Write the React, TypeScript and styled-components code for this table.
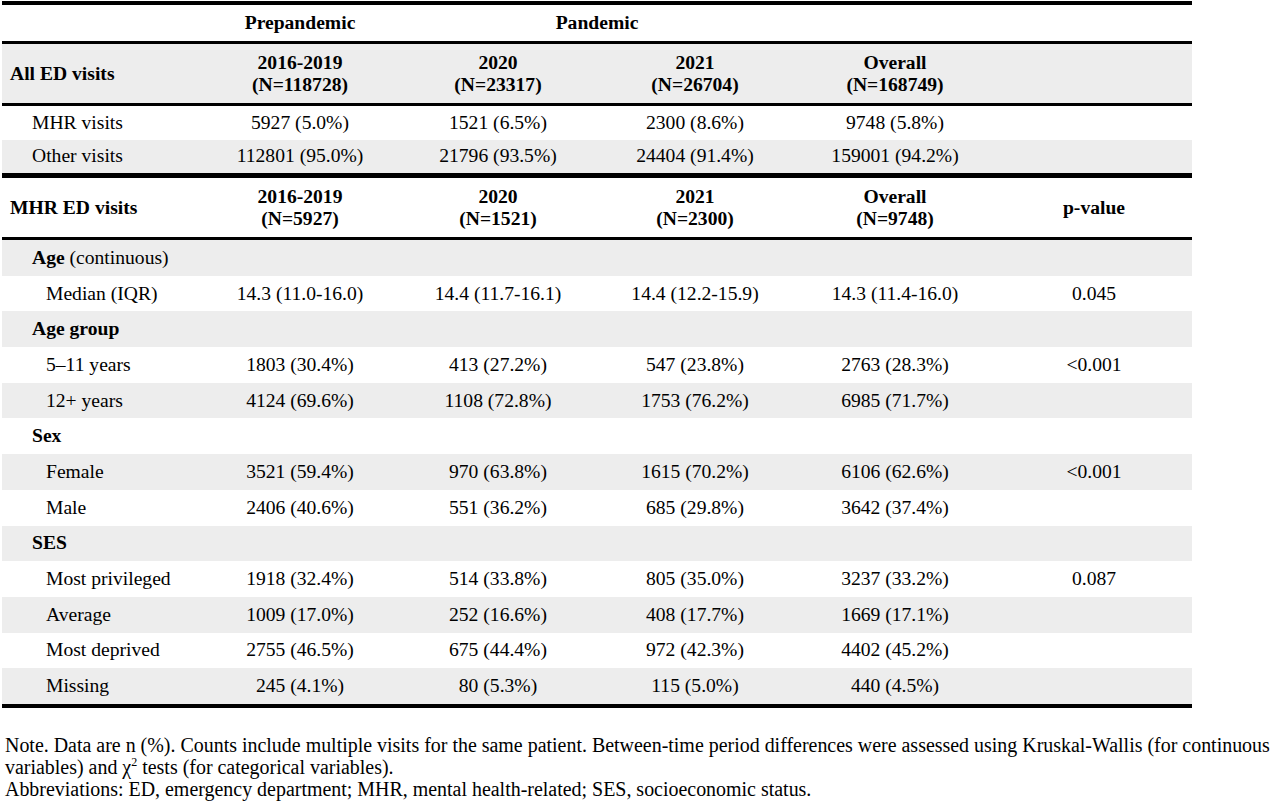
import styled, { createGlobalStyle } from "styled-components";

const GlobalStyle = createGlobalStyle`
    html, body {
        margin: 0;
        padding: 0;
        background: #fff;
        overflow: hidden;
    }
    body {
        font-family: "Liberation Serif", "Times New Roman", serif;
        color: #000;
    }
`;

const Page = styled.div`
    width: 1280px;
    height: 802px;
    padding: 1px 0 0 2px;
    box-sizing: border-box;
`;

const Table = styled.div`
    width: 1190px;
    display: flex;
    flex-direction: column;
    font-size: 19.6px;
`;

const Rule = styled.div<{ $h: number }>`
    height: ${p => p.$h}px;
    background: #000;
`;

const Row = styled.div<{ $h: number; $shade?: boolean }>`
    display: grid;
    grid-template-columns: 198px 200px 196px 198px 202px 196px;
    height: ${p => p.$h}px;
    background: ${p => (p.$shade ? '#ededed' : '#fff')};
    align-items: center;
`;

const Cell = styled.div<{ $indent?: number; $bold?: boolean; $span?: number }>`
    text-align: ${p => (p.$indent !== undefined ? 'left' : 'center')};
    padding-left: ${p => p.$indent ?? 0}px;
    font-weight: ${p => (p.$bold ? 700 : 400)};
    line-height: 22px;
    white-space: nowrap;
    grid-column: span ${p => p.$span ?? 1};
`;

const Note = styled.div`
    margin-top: 26px;
    padding-left: 3px;
    font-size: 19.95px;
    line-height: 22px;
    white-space: nowrap;
`;

const Sup = styled.sup`
    font-size: 12px;
    vertical-align: 8px;
    line-height: 0;
`;

type DataRow = {
    label: string;
    bold?: string;
    indent: number;
    values: string[];
    p?: string;
};

const groups: DataRow[] = [
    { label: ' (continuous)', bold: 'Age', indent: 30, values: [] },
    { label: 'Median (IQR)', indent: 44, values: ['14.3 (11.0-16.0)', '14.4 (11.7-16.1)', '14.4 (12.2-15.9)', '14.3 (11.4-16.0)'], p: '0.045' },
    { label: '', bold: 'Age group', indent: 30, values: [] },
    { label: '5–11 years', indent: 44, values: ['1803 (30.4%)', '413 (27.2%)', '547 (23.8%)', '2763 (28.3%)'], p: '<0.001' },
    { label: '12+ years', indent: 44, values: ['4124 (69.6%)', '1108 (72.8%)', '1753 (76.2%)', '6985 (71.7%)'] },
    { label: '', bold: 'Sex', indent: 30, values: [] },
    { label: 'Female', indent: 44, values: ['3521 (59.4%)', '970 (63.8%)', '1615 (70.2%)', '6106 (62.6%)'], p: '<0.001' },
    { label: 'Male', indent: 44, values: ['2406 (40.6%)', '551 (36.2%)', '685 (29.8%)', '3642 (37.4%)'] },
    { label: '', bold: 'SES', indent: 30, values: [] },
    { label: 'Most privileged', indent: 44, values: ['1918 (32.4%)', '514 (33.8%)', '805 (35.0%)', '3237 (33.2%)'], p: '0.087' },
    { label: 'Average', indent: 44, values: ['1009 (17.0%)', '252 (16.6%)', '408 (17.7%)', '1669 (17.1%)'] },
    { label: 'Most deprived', indent: 44, values: ['2755 (46.5%)', '675 (44.4%)', '972 (42.3%)', '4402 (45.2%)'] },
    { label: 'Missing', indent: 44, values: ['245 (4.1%)', '80 (5.3%)', '115 (5.0%)', '440 (4.5%)'] },
];

function HeadCell(props: { top: string, bottom: string }) {
    return (
        <Cell $bold>
            {props.top}<br />{props.bottom}
        </Cell>
    );
}

export default function App() {
    return (
        <>
            <GlobalStyle />
            <Page>
                <Table>
                    <Rule $h={4} />
                    <Row $h={36}>
                        <Cell />
                        <Cell $bold>Prepandemic</Cell>
                        <Cell $bold $span={2}>Pandemic</Cell>
                        <Cell />
                        <Cell />
                    </Row>
                    <Rule $h={3} />
                    <Row $h={59} $shade>
                        <Cell $bold $indent={8}>All ED visits</Cell>
                        <HeadCell top="2016-2019" bottom="(N=118728)" />
                        <HeadCell top="2020" bottom="(N=23317)" />
                        <HeadCell top="2021" bottom="(N=26704)" />
                        <HeadCell top="Overall" bottom="(N=168749)" />
                        <Cell />
                    </Row>
                    <Rule $h={3} />
                    <Row $h={33.5}>
                        <Cell $indent={30}>MHR visits</Cell>
                        <Cell>5927 (5.0%)</Cell>
                        <Cell>1521 (6.5%)</Cell>
                        <Cell>2300 (8.6%)</Cell>
                        <Cell>9748 (5.8%)</Cell>
                        <Cell />
                    </Row>
                    <Row $h={33.5} $shade>
                        <Cell $indent={30}>Other visits</Cell>
                        <Cell>112801 (95.0%)</Cell>
                        <Cell>21796 (93.5%)</Cell>
                        <Cell>24404 (91.4%)</Cell>
                        <Cell>159001 (94.2%)</Cell>
                        <Cell />
                    </Row>
                    <Rule $h={5} />
                    <Row $h={59}>
                        <Cell $bold $indent={8}>MHR ED visits</Cell>
                        <HeadCell top="2016-2019" bottom="(N=5927)" />
                        <HeadCell top="2020" bottom="(N=1521)" />
                        <HeadCell top="2021" bottom="(N=2300)" />
                        <HeadCell top="Overall" bottom="(N=9748)" />
                        <Cell $bold>p-value</Cell>
                    </Row>
                    <Rule $h={3} />
                    {groups.map((row, i) => (
                        <Row $h={35.7} $shade={i % 2 === 0} key={i}>
                            <Cell $indent={row.indent}>
                                {row.bold && <b>{row.bold}</b>}{row.label}
                            </Cell>
                            {[0, 1, 2, 3].map(c => <Cell key={c}>{row.values[c] ?? ''}</Cell>)}
                            <Cell>{row.p ?? ''}</Cell>
                        </Row>
                    ))}
                    <Rule $h={4} />
                </Table>
                <Note>
                    Note. Data are n (%). Counts include multiple visits for the same patient. Between-time period differences were assessed using Kruskal-Wallis (for continuous<br />
                    variables) and χ<Sup>2</Sup> tests (for categorical variables).<br />
                    Abbreviations: ED, emergency department; MHR, mental health-related; SES, socioeconomic status.
                </Note>
            </Page>
        </>
    );
}
